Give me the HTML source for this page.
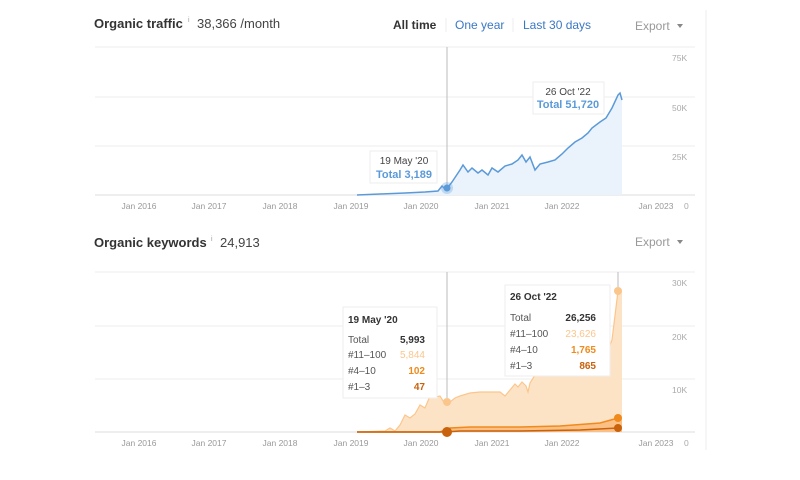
<!DOCTYPE html>
<html><head><meta charset="utf-8"><style>
body{margin:0;width:800px;height:480px;background:#fff;font-family:"Liberation Sans",sans-serif;overflow:hidden}
svg{position:absolute;left:0;top:0}
</style></head><body>
<svg width="800" height="480" viewBox="0 0 800 480" font-family="Liberation Sans, sans-serif">
<line x1="706" y1="10" x2="706" y2="450" stroke="#eee"/>
<text x="94" y="28" font-size="13" font-weight="bold" fill="#333">Organic traffic</text>
<text x="188" y="22" font-size="7" fill="#999">i</text>
<text x="197" y="28" font-size="13" fill="#444">38,366 /month</text>
<text x="393" y="29" font-size="12" font-weight="bold" fill="#333">All time</text>
<line x1="446" y1="18" x2="446" y2="32" stroke="#eee"/>
<text x="455" y="29" font-size="12" fill="#3a78c4">One year</text>
<line x1="513" y1="18" x2="513" y2="32" stroke="#eee"/>
<text x="523" y="29" font-size="12" fill="#3a78c4">Last 30 days</text>
<text x="635" y="30" font-size="12" fill="#999">Export</text>
<path d="M677 24h6l-3 4z" fill="#888"/>
<g stroke="#eee"><line x1="95" y1="47" x2="695" y2="47"/><line x1="95" y1="97" x2="695" y2="97"/><line x1="95" y1="146" x2="695" y2="146"/></g>
<line x1="95" y1="195" x2="695" y2="195" stroke="#ddd"/>
<g font-size="8.5" fill="#aaa"><text x="672" y="61">75K</text><text x="672" y="111">50K</text><text x="672" y="160">25K</text><text x="684" y="209">0</text></g>
<g font-size="8.5" fill="#999" text-anchor="middle"><text x="139" y="209">Jan 2016</text><text x="209" y="209">Jan 2017</text><text x="280" y="209">Jan 2018</text><text x="351" y="209">Jan 2019</text><text x="421" y="209">Jan 2020</text><text x="492" y="209">Jan 2021</text><text x="562" y="209">Jan 2022</text><text x="656" y="209">Jan 2023</text></g>
<line x1="447" y1="47" x2="447" y2="195" stroke="#bbb"/>
<path d="M357 195L380 194L405 193L425 192L438 191L442 186L446 190L452 182L460 170L463 165L468 172L472 168L478 173L482 170L488 175L492 168L498 172L505 166L512 164L518 160L522 155L526 162L530 157L535 170L540 164L548 162L555 160L562 154L568 148L575 142L582 138L588 133L592 128L600 122L606 118L612 108L618 95L620 93L622 100L622 195Z" fill="#eaf2fc"/>
<path d="M357 195L380 194L405 193L425 192L438 191L442 186L446 190L452 182L460 170L463 165L468 172L472 168L478 173L482 170L488 175L492 168L498 172L505 166L512 164L518 160L522 155L526 162L530 157L535 170L540 164L548 162L555 160L562 154L568 148L575 142L582 138L588 133L592 128L600 122L606 118L612 108L618 95L620 93L622 100" fill="none" stroke="#5b9ad8" stroke-width="1.5"/>
<circle cx="447" cy="188" r="6" fill="#5b9ad8" opacity=".3"/><circle cx="447" cy="188" r="3.5" fill="#5b9ad8"/>
<rect x="370" y="151" width="67" height="32" fill="#fff" stroke="#eee"/>
<text x="404" y="164" font-size="10" fill="#444" text-anchor="middle">19 May '20</text>
<text x="404" y="178" font-size="11" font-weight="bold" fill="#5b9ad8" text-anchor="middle">Total 3,189</text>
<rect x="533" y="82" width="71" height="32" fill="#fff" stroke="#eee"/>
<text x="568" y="95" font-size="10" fill="#444" text-anchor="middle">26 Oct '22</text>
<text x="568" y="108" font-size="11" font-weight="bold" fill="#5b9ad8" text-anchor="middle">Total 51,720</text>
<text x="94" y="247" font-size="13" font-weight="bold" fill="#333">Organic keywords</text>
<text x="211" y="241" font-size="7" fill="#999">i</text>
<text x="220" y="247" font-size="13" fill="#444">24,913</text>
<text x="635" y="246" font-size="12" fill="#999">Export</text>
<path d="M677 240h6l-3 4z" fill="#888"/>
<g stroke="#eee"><line x1="95" y1="272" x2="695" y2="272"/><line x1="95" y1="326" x2="695" y2="326"/><line x1="95" y1="379" x2="695" y2="379"/></g>
<line x1="95" y1="432" x2="695" y2="432" stroke="#ddd"/>
<g font-size="8.5" fill="#aaa"><text x="672" y="286">30K</text><text x="672" y="340">20K</text><text x="672" y="393">10K</text><text x="684" y="446">0</text></g>
<g font-size="8.5" fill="#999" text-anchor="middle"><text x="139" y="446">Jan 2016</text><text x="209" y="446">Jan 2017</text><text x="280" y="446">Jan 2018</text><text x="351" y="446">Jan 2019</text><text x="421" y="446">Jan 2020</text><text x="492" y="446">Jan 2021</text><text x="562" y="446">Jan 2022</text><text x="656" y="446">Jan 2023</text></g>
<line x1="447" y1="272" x2="447" y2="432" stroke="#bbb"/>
<line x1="618" y1="272" x2="618" y2="432" stroke="#bbb"/>
<path d="M357 432L385 431L390 428L395 431L400 425L405 415L410 418L415 414L420 405L425 408L430 396L435 397L440 396L445 404L450 402L455 398L460 396L470 393L480 392L490 392L500 392L505 396L510 390L515 384L518 387L522 382L526 386L528 392L530 383L535 375L545 372L555 370L570 368L590 362L605 358L612 340L618 291L622 291L622 432Z" fill="#fde3c6"/>
<path d="M357 432L385 431L390 428L395 431L400 425L405 415L410 418L415 414L420 405L425 408L430 396L435 397L440 396L445 404L450 402L455 398L460 396L470 393L480 392L490 392L500 392L505 396L510 390L515 384L518 387L522 382L526 386L528 392L530 383L535 375L545 372L555 370L570 368L590 362L605 358L612 340L618 291" fill="none" stroke="#fbc68c" stroke-width="1.2"/>
<path d="M357 432L440 432L450 428L470 427L520 427L560 426L600 423L618 418L622 418L622 432Z" fill="#f9b06a" opacity=".7"/>
<path d="M357 432L440 432L450 428L470 427L520 427L560 426L600 423L618 418" fill="none" stroke="#f08a1c" stroke-width="1.5"/>
<path d="M357 432L445 432L460 431L520 431L580 430L618 428" fill="none" stroke="#c8620c" stroke-width="1.5"/>
<circle cx="447" cy="402" r="4" fill="#fbc68c"/>
<circle cx="618" cy="291" r="4" fill="#fbc68c"/>
<circle cx="618" cy="418" r="4" fill="#f08a1c"/>
<circle cx="618" cy="428" r="4" fill="#c8620c"/>
<circle cx="447" cy="432" r="5" fill="#c8620c"/>
<rect x="343" y="307" width="94" height="91" fill="#fff" stroke="#eee"/>
<g font-size="10"><text x="348" y="323" font-weight="bold" fill="#333">19 May '20</text>
<text x="348" y="343" fill="#555">Total</text><text x="425" y="343" text-anchor="end" font-weight="bold" fill="#333">5,993</text>
<text x="348" y="358" fill="#555">#11–100</text><text x="425" y="358" text-anchor="end" fill="#fbc68c">5,844</text>
<text x="348" y="374" fill="#555">#4–10</text><text x="425" y="374" text-anchor="end" font-weight="bold" fill="#f08a1c">102</text>
<text x="348" y="390" fill="#555">#1–3</text><text x="425" y="390" text-anchor="end" font-weight="bold" fill="#c8620c">47</text></g>
<rect x="505" y="285" width="105" height="91" fill="#fff" stroke="#eee"/>
<g font-size="10"><text x="510" y="300" font-weight="bold" fill="#333">26 Oct '22</text>
<text x="510" y="321" fill="#555">Total</text><text x="596" y="321" text-anchor="end" font-weight="bold" fill="#333">26,256</text>
<text x="510" y="337" fill="#555">#11–100</text><text x="596" y="337" text-anchor="end" fill="#fbc68c">23,626</text>
<text x="510" y="353" fill="#555">#4–10</text><text x="596" y="353" text-anchor="end" font-weight="bold" fill="#f08a1c">1,765</text>
<text x="510" y="369" fill="#555">#1–3</text><text x="596" y="369" text-anchor="end" font-weight="bold" fill="#c8620c">865</text></g>
</svg>
</body></html>
